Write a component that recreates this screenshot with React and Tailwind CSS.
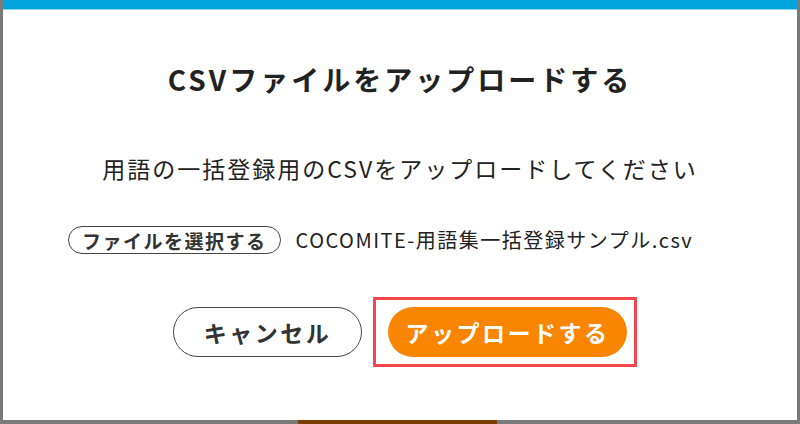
import React from 'react';

const jp = { fontFamily: '"Noto Sans CJK JP", "Noto Sans", sans-serif' };

export default function App() {
  return (
    <div className="w-[800px] h-[424px] bg-[#7a7a7a] flex flex-col" style={jp}>
      <div className="flex-1 flex px-[3px] min-h-0">
        <div className="flex-1 bg-white flex flex-col border-t-[9px] border-[#00a3dc]">
          <div className="h-px bg-[#8fd8f3]" />
          <div className="flex-1 flex flex-col items-center text-[#222]">
            <h1 className="mt-[52px] text-[28px] leading-[34px] font-bold tracking-[3px]">
              CSVファイルをアップロードする
            </h1>
            <p className="mt-[57px] text-[23px] leading-[30px] tracking-[2px]">
              用語の一括登録用のCSVをアップロードしてください
            </p>
            <div className="mt-[42px] w-full flex items-center pl-[65px]">
              <button className="h-[28px] px-[13px] rounded-full border-[1.5px] border-[#444] bg-white text-[19px] font-bold leading-none tracking-[1.5px] text-[#333]">
                ファイルを選択する
              </button>
              <span className="ml-[15px] text-[20px] tracking-[1.5px]">
                COCOMITE-用語集一括登録サンプル.csv
              </span>
            </div>
            <div className="mt-[42px] w-full flex items-center pl-[170px]">
              <button className="w-[189px] h-[50px] rounded-full border-[1.5px] border-[#444] bg-white text-[23px] font-bold tracking-[2.5px] text-[#333]">
                キャンセル
              </button>
              <div className="ml-[11px] pl-[12px] pr-[7px] py-[7px] border-[3px] border-[#f4444c]">
                <button className="w-[239px] h-[50px] rounded-full bg-[#f98500] text-white text-[23px] font-bold tracking-[2.5px]">
                  アップロードする
                </button>
              </div>
            </div>
          </div>
        </div>
      </div>
      <div className="h-[4px] flex">
        <div className="ml-[298px] w-[199px] bg-[#7c3f00]" />
      </div>
    </div>
  );
}
